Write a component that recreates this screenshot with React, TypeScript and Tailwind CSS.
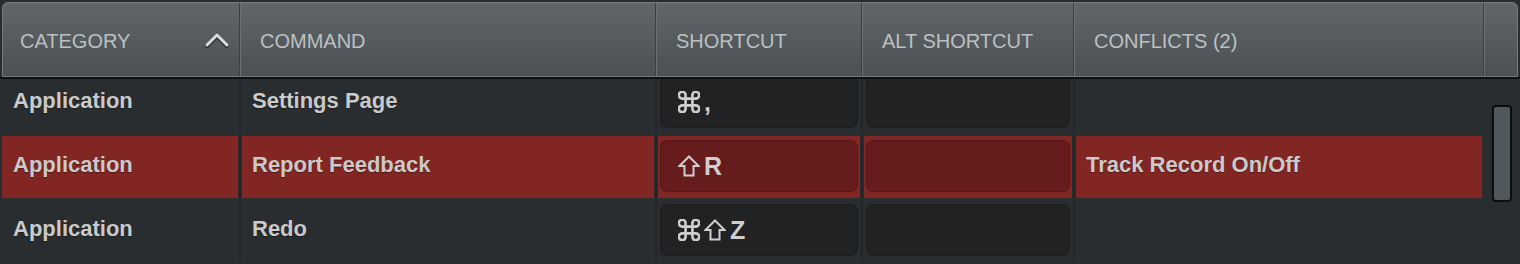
import React from "react";

type Row = {
  category: string;
  command: string;
  shortcut: string;
  alt: string;
  conflict: string;
  red?: boolean;
};

const rows: Row[] = [
  { category: "Application", command: "Settings Page", shortcut: "⌘,", alt: "", conflict: "" },
  { category: "Application", command: "Report Feedback", shortcut: "⇧R", alt: "", conflict: "Track Record On/Off", red: true },
  { category: "Application", command: "Redo", shortcut: "⌘⇧Z", alt: "", conflict: "" },
];

function CmdIcon() {
  return (
    <svg width="22" height="22" viewBox="2.3 2.3 19.4 19.4" className="shrink-0" aria-label="⌘">
      <path
        d="M15 6v12a3 3 0 1 0 3-3H6a3 3 0 1 0 3 3V6a3 3 0 1 0-3 3h12a3 3 0 1 0-3-3"
        fill="none"
        stroke="#cfcfcf"
        strokeWidth="2.3"
        strokeLinecap="round"
        strokeLinejoin="round"
      />
    </svg>
  );
}

function ShiftIcon() {
  return (
    <svg width="22" height="22" viewBox="0 0 22 22" className="shrink-0" aria-label="⇧">
      <path
        d="M11 1.5 L20.5 11 H15.5 V20.5 H6.5 V11 H1.5 Z"
        fill="none"
        stroke="#cfcfcf"
        strokeWidth="2"
        strokeLinejoin="miter"
      />
    </svg>
  );
}

function KeyContent({ text }: { text: string }) {
  const parts = Array.from(text);
  return (
    <div className="flex items-center gap-[4px]">
      {parts.map((p, i) =>
        p === "⌘" ? (
          <CmdIcon key={i} />
        ) : p === "⇧" ? (
          <ShiftIcon key={i} />
        ) : (
          <span key={i} className="text-[25px] leading-none font-bold">
            {p}
          </span>
        )
      )}
    </div>
  );
}

function Gap() {
  return (
    <div className="w-[4px] shrink-0 flex justify-center">
      <div className="w-[2px] h-full bg-[#232629]" />
    </div>
  );
}

function TextCell({ w, text, red, pl }: { w: string; text: string; red?: boolean; pl: string }) {
  return (
    <div
      className={`${w} ${pl} shrink-0 flex items-center pb-[6px] text-[22px] font-bold text-[#cacaca] [text-shadow:0_1px_1px_rgba(0,0,0,0.35)] ${
        red ? "bg-[#822624]" : ""
      }`}
    >
      {text}
    </div>
  );
}

function KeyCell({ w, text, red }: { w: string; text: string; red?: boolean }) {
  return (
    <div className={`${w} shrink-0 px-[2px] pt-[4px] pb-[6px] ${red ? "bg-[#822624]" : ""}`}>
      <div
        className={`h-full rounded-[7px] border flex items-center pl-[17px] text-[#cfcfcf] ${
          red ? "bg-[#661c1d] border-[#561718]" : "bg-[#202224] border-[#1a1c1e]"
        }`}
      >
        <KeyContent text={text} />
      </div>
    </div>
  );
}

function HeaderCell({ w, label, first, children }: { w: string; label: string; first?: boolean; children?: React.ReactNode }) {
  return (
    <div
      className={`${w} shrink-0 h-full flex items-center pt-[3px] ${
        first ? "pl-[17px]" : "pl-[19px] border-l border-[#6a7174] shadow-[-1px_0_0_#3a3f42]"
      } text-[20px] text-[#bcc0c2]`}
    >
      <span className="flex-1">{label}</span>
      {children}
    </div>
  );
}

export default function App() {
  return (
    <div className="w-[1520px] h-[264px] bg-[#2a2d30] overflow-hidden font-['Liberation_Sans',Arial,sans-serif]">
      <div className="pt-[2px] px-[2px]">
        <div className="h-[75px] rounded-t-[6px] border border-[#747b7e] bg-gradient-to-b from-[#616769] to-[#4a5053] flex">
          <HeaderCell w="w-[237px]" label="CATEGORY" first>
            <svg width="26" height="18" viewBox="0 0 26 18" className="mr-[10px] mb-[2px]">
              <polyline points="3,15 13,5 23,15" fill="none" stroke="#2a2e31" strokeWidth="4" strokeLinecap="round" strokeLinejoin="round" />
              <polyline points="3,14 13,4 23,14" fill="none" stroke="#d3dee3" strokeWidth="3" strokeLinecap="round" strokeLinejoin="round" />
            </svg>
          </HeaderCell>
          <HeaderCell w="w-[416px]" label="COMMAND" />
          <HeaderCell w="w-[206px]" label="SHORTCUT" />
          <HeaderCell w="w-[212px]" label="ALT SHORTCUT" />
          <HeaderCell w="w-[410px]" label="CONFLICTS (2)" />
          <div className="flex-1 h-full border-l border-[#6a7174] shadow-[-1px_0_0_#3a3f42]" />
        </div>
      </div>
      <div className="h-[2px] bg-[#0e0f10]" />
      <div className="flex h-[185px] overflow-hidden">
        <div className="w-[1482px] pl-[2px] overflow-hidden">
          <div className="-mt-[7px] flex flex-col gap-[2px]">
            {rows.map((r, i) => (
              <div key={i} className="flex h-[62px]">
                <TextCell w="w-[236px]" pl="pl-[11px]" text={r.category} red={r.red} />
                <Gap />
                <TextCell w="w-[412px]" pl="pl-[10px]" text={r.command} red={r.red} />
                <Gap />
                <KeyCell w="w-[202px]" text={r.shortcut} red={r.red} />
                <Gap />
                <KeyCell w="w-[208px]" text={r.alt} red={r.red} />
                <Gap />
                <TextCell w="w-[406px]" pl="pl-[10px]" text={r.conflict} red={r.red} />
              </div>
            ))}
          </div>
        </div>
        <div className="flex-1 pl-[10px] pt-[26px]">
          <div className="w-[20px] h-[97px] rounded-[4px] border-2 border-[#0c0d0e] bg-[#51585c]" />
        </div>
      </div>
    </div>
  );
}
